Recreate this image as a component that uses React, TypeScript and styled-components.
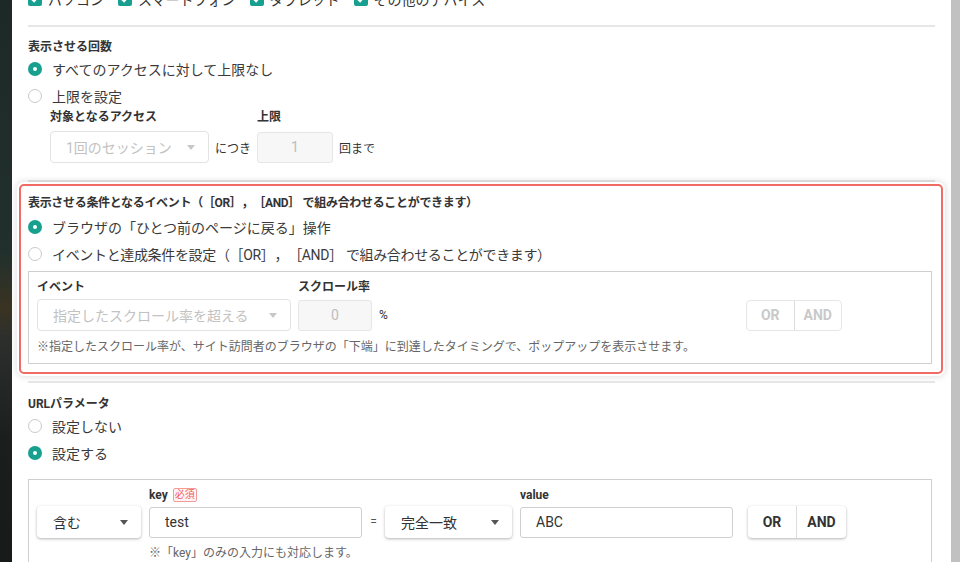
import React from 'react';
import styled, { createGlobalStyle, css } from 'styled-components';

const TEAL = '#17a08f';

const GlobalStyle = createGlobalStyle`
  html, body {
    margin: 0;
    padding: 0;
  }
  body {
    font-family: Roboto, "Noto Sans CJK JP", sans-serif;
    color: #333;
    overflow: hidden;
    text-spacing-trim: space-all;
  }
  * {
    box-sizing: border-box;
  }
`;

const Screen = styled.div`
  display: flex;
  width: 960px;
  height: 562px;
  overflow: hidden;
`;

const Backdrop = styled.div`
  flex: 0 0 12px;
  background: linear-gradient(
    180deg,
    #1d2927 0%,
    #22302d 45%,
    #3a3322 55%,
    #2d2f2d 60%,
    #1a1f1e 78%,
    #161a19 100%
  );
`;

const Panel = styled.div`
  flex: 1;
  background: #fff;
  overflow: hidden;
`;

const Scrollbar = styled.div`
  flex: 0 0 9px;
  background: #c1c1c1;
`;

const Content = styled.div`
  margin-top: -12px;
  padding: 0 16px;
`;

const CheckRow = styled.div`
  display: flex;
  align-items: center;
  gap: 14px;
  height: 22px;
  font-size: 14px;
`;

const CheckItem = styled.label`
  display: flex;
  align-items: center;
  gap: 6px;
`;

const CheckBox = styled.span`
  display: flex;
  align-items: center;
  justify-content: center;
  width: 14px;
  height: 14px;
  border-radius: 2px;
  background: ${TEAL};
`;

const Divider = styled.div<{ $mt: number }>`
  height: 2px;
  margin-top: ${(p) => p.$mt}px;
  background: #e6e6e6;
`;

const Section = styled.div<{ $pt: number; $pb: number }>`
  padding-top: ${(p) => p.$pt}px;
  padding-bottom: ${(p) => p.$pb}px;
`;

const SectionLabel = styled.div<{ $mb?: number; $tight?: boolean }>`
  font-size: 12px;
  font-weight: 700;
  line-height: 16px;
  color: #333;
  margin-bottom: ${(p) => p.$mb || 0}px;
  letter-spacing: ${(p) => (p.$tight ? '-0.32px' : 'normal')};
`;

const RadioRow = styled.label<{ $tight?: boolean }>`
  display: flex;
  align-items: center;
  gap: 10px;
  height: 27px;
  font-size: 14px;
  color: #3a3a3a;
  letter-spacing: ${(p) => (p.$tight ? '-0.34px' : 'normal')};
`;

const RadioDot = styled.span<{ $on?: boolean }>`
  position: relative;
  flex: 0 0 14px;
  width: 14px;
  height: 14px;
  border-radius: 50%;
  ${(p) =>
    p.$on
      ? css`
          background: ${TEAL};
          &::after {
            content: '';
            position: absolute;
            left: 5px;
            top: 5px;
            width: 4px;
            height: 4px;
            border-radius: 50%;
            background: #fff;
          }
        `
      : css`
          background: #fff;
          border: 1px solid #c9c9c9;
        `}
`;

const LimitGrid = styled.div`
  display: grid;
  grid-template-columns: 159px auto 76px auto;
  grid-template-rows: 16px 32px;
  justify-content: start;
  column-gap: 6px;
  row-gap: 6px;
  align-items: center;
  padding-left: 22px;
  font-size: 12px;
`;

const Blank = styled.span``;

const FieldLabel = styled.div`
  font-size: 12px;
  font-weight: 700;
  line-height: 16px;
  color: #333;
  display: flex;
  align-items: center;
  gap: 5px;
`;

const InlineText = styled.span`
  font-size: 12px;
  color: #333;
`;

const Caret = styled.span<{ $disabled?: boolean }>`
  width: 0;
  height: 0;
  border-left: 4px solid transparent;
  border-right: 4px solid transparent;
  border-top: 5px solid ${(p) => (p.$disabled ? '#c8c8c8' : '#555')};
`;

const SelectBox = styled.div<{ $disabled?: boolean }>`
  display: flex;
  align-items: center;
  justify-content: space-between;
  height: 32px;
  padding: 0 13px 0 16px;
  border-radius: 4px;
  font-size: 14px;
  background: #fff;
  white-space: nowrap;
  ${(p) =>
    p.$disabled
      ? css`
          border: 1px solid #e3e3e3;
          color: #c2c2c2;
          padding-left: 15px;
        `
      : css`
          color: #333;
          box-shadow: 0 1px 3px rgba(0, 0, 0, 0.3);
        `}
`;

const TextInput = styled.input<{ $disabled?: boolean }>`
  width: 100%;
  height: 31px;
  padding: 0 15px;
  border-radius: 3px;
  font-family: Roboto, "Noto Sans CJK JP", sans-serif;
  font-size: 14px;
  outline: none;
  ${(p) =>
    p.$disabled
      ? css`
          background: #f7f7f7;
          border: 1px solid #e6e6e6;
          color: #bdbdbd;
          -webkit-text-fill-color: #bdbdbd;
          text-align: center;
        `
      : css`
          background: #fff;
          border: 1px solid #cfcfcf;
          color: #333;
        `}
`;

const ButtonGroup = styled.div<{ $disabled?: boolean }>`
  display: flex;
  height: 32px;
  border-radius: 4px;
  overflow: hidden;
  background: #fff;
  ${(p) =>
    p.$disabled
      ? css`
          border: 1px solid #e6e6e6;
          height: 31px;
        `
      : css`
          box-shadow: 0 1px 3px rgba(0, 0, 0, 0.3);
        `}
`;

const GroupButton = styled.div<{ $w: number; $disabled?: boolean }>`
  display: flex;
  align-items: center;
  justify-content: center;
  width: ${(p) => p.$w}px;
  font-family: Roboto, sans-serif;
  font-size: 14px;
  font-weight: 700;
  color: ${(p) => (p.$disabled ? '#c9c9c9' : '#333')};
  & + & {
    border-left: 1px solid ${(p) => (p.$disabled ? '#e3e3e3' : '#dcdcdc')};
  }
`;

const Highlight = styled.div`
  margin: 2px -8px 7px -9px;
  padding: 9px 6px 8px 7px;
  border: 2px solid #ef6b63;
  border-radius: 5px;
  box-shadow: 0 0 0 2px #fff, 0 0 6px 3px rgba(0, 0, 0, 0.12);
`;

const RuleBox = styled.div<{ $mt: number; $pt: number }>`
  margin: ${(p) => p.$mt}px 3px 0 0;
  padding: ${(p) => p.$pt}px 7px 8px 8px;
  border: 1px solid #cfcfcf;
`;

const EventGrid = styled.div`
  display: grid;
  grid-template-columns: 254px 74px 360px 96px;
  grid-template-rows: 16px 32px auto;
  column-gap: 7px;
  row-gap: 4px;
  align-items: center;
`;

const ParamGrid = styled.div`
  display: grid;
  grid-template-columns: 104px 213px 7px 127px 213px 105px;
  grid-template-rows: 18px 32px auto;
  column-gap: 8px;
  row-gap: 2px;
  align-items: center;
`;

const Note = styled.div<{ $col: string; $mt: number }>`
  grid-column: ${(p) => p.$col};
  margin-top: ${(p) => p.$mt}px;
  font-size: 12px;
  line-height: 16px;
  color: #666;
  white-space: nowrap;
`;

const Badge = styled.span`
  display: inline-flex;
  align-items: center;
  height: 14px;
  padding: 0 1px;
  border: 1px solid #f49a97;
  border-radius: 2px;
  background: #fff5f5;
  color: #f0605a;
  font-size: 10px;
  font-weight: 400;
`;

const Equals = styled.span`
  text-align: center;
  font-size: 12px;
  color: #555;
`;

const Right = styled.div`
  justify-self: end;
`;

const Check = () => (
  <CheckBox>
    <svg width="10" height="10" viewBox="0 0 10 10">
      <path d="M1.8 5.2 L4.1 7.4 L8.3 2.6" fill="none" stroke="#fff" strokeWidth="1.8" />
    </svg>
  </CheckBox>
);

const Radio = ({
  on,
  tight,
  children,
}: {
  on?: boolean;
  tight?: boolean;
  children: React.ReactNode;
}) => (
  <RadioRow $tight={tight}>
    <RadioDot $on={on} />
    {children}
  </RadioRow>
);

const Select = ({ label, disabled }: { label: string; disabled?: boolean }) => (
  <SelectBox $disabled={disabled}>
    <span>{label}</span>
    <Caret $disabled={disabled} />
  </SelectBox>
);

const OrAnd = ({ disabled }: { disabled?: boolean }) => (
  <ButtonGroup $disabled={disabled}>
    <GroupButton $w={disabled ? 47 : 48} $disabled={disabled}>
      OR
    </GroupButton>
    <GroupButton $w={disabled ? 48 : 50} $disabled={disabled}>
      AND
    </GroupButton>
  </ButtonGroup>
);

const devices = ['パソコン', 'スマートフォン', 'タブレット', 'その他のデバイス'];

export default function App() {
  return (
    <>
      <GlobalStyle />
      <Screen>
        <Backdrop />
        <Panel>
          <Content>
            <CheckRow>
              {devices.map((d) => (
                <CheckItem key={d}>
                  <Check />
                  {d}
                </CheckItem>
              ))}
            </CheckRow>
            <Divider $mt={15} />

            <Section $pt={12} $pb={17}>
              <SectionLabel>表示させる回数</SectionLabel>
              <Radio on>すべてのアクセスに対して上限なし</Radio>
              <Radio>上限を設定</Radio>
              <LimitGrid>
                <FieldLabel>対象となるアクセス</FieldLabel>
                <Blank />
                <FieldLabel>上限</FieldLabel>
                <Blank />
                <Select label="1回のセッション" disabled />
                <InlineText>につき</InlineText>
                <TextInput $disabled disabled defaultValue="1" />
                <InlineText>回まで</InlineText>
              </LimitGrid>
            </Section>
            <Divider $mt={0} />

            <Highlight>
              <SectionLabel $mb={2} $tight>
                表示させる条件となるイベント（［OR］，［AND］ で組み合わせることができます）
              </SectionLabel>
              <Radio on>ブラウザの「ひとつ前のページに戻る」操作</Radio>
              <Radio tight>
                イベントと達成条件を設定（［OR］，［AND］ で組み合わせることができます）
              </Radio>
              <RuleBox $mt={4} $pt={7}>
                <EventGrid>
                  <FieldLabel>イベント</FieldLabel>
                  <FieldLabel>スクロール率</FieldLabel>
                  <Blank />
                  <Blank />
                  <Select label="指定したスクロール率を超える" disabled />
                  <TextInput $disabled disabled defaultValue="0" />
                  <InlineText>%</InlineText>
                  <OrAnd disabled />
                  <Note $col="1 / span 4" $mt={4}>
                    ※指定したスクロール率が、サイト訪問者のブラウザの「下端」に到達したタイミングで、ポップアップを表示させます。
                  </Note>
                </EventGrid>
              </RuleBox>
            </Highlight>
            <Divider $mt={0} />

            <Section $pt={13} $pb={0}>
              <SectionLabel>URLパラメータ</SectionLabel>
              <Radio>設定しない</Radio>
              <Radio on>設定する</Radio>
              <RuleBox $mt={13} $pt={6}>
                <ParamGrid>
                  <Blank />
                  <FieldLabel>
                    key <Badge>必須</Badge>
                  </FieldLabel>
                  <Blank />
                  <Blank />
                  <FieldLabel>value</FieldLabel>
                  <Blank />
                  <Select label="含む" />
                  <TextInput defaultValue="test" />
                  <Equals>=</Equals>
                  <Select label="完全一致" />
                  <TextInput defaultValue="ABC" />
                  <Right>
                    <OrAnd />
                  </Right>
                  <Note $col="2 / span 4" $mt={5}>
                    ※「key」のみの入力にも対応します。
                  </Note>
                </ParamGrid>
              </RuleBox>
            </Section>
          </Content>
        </Panel>
        <Scrollbar />
      </Screen>
    </>
  );
}
